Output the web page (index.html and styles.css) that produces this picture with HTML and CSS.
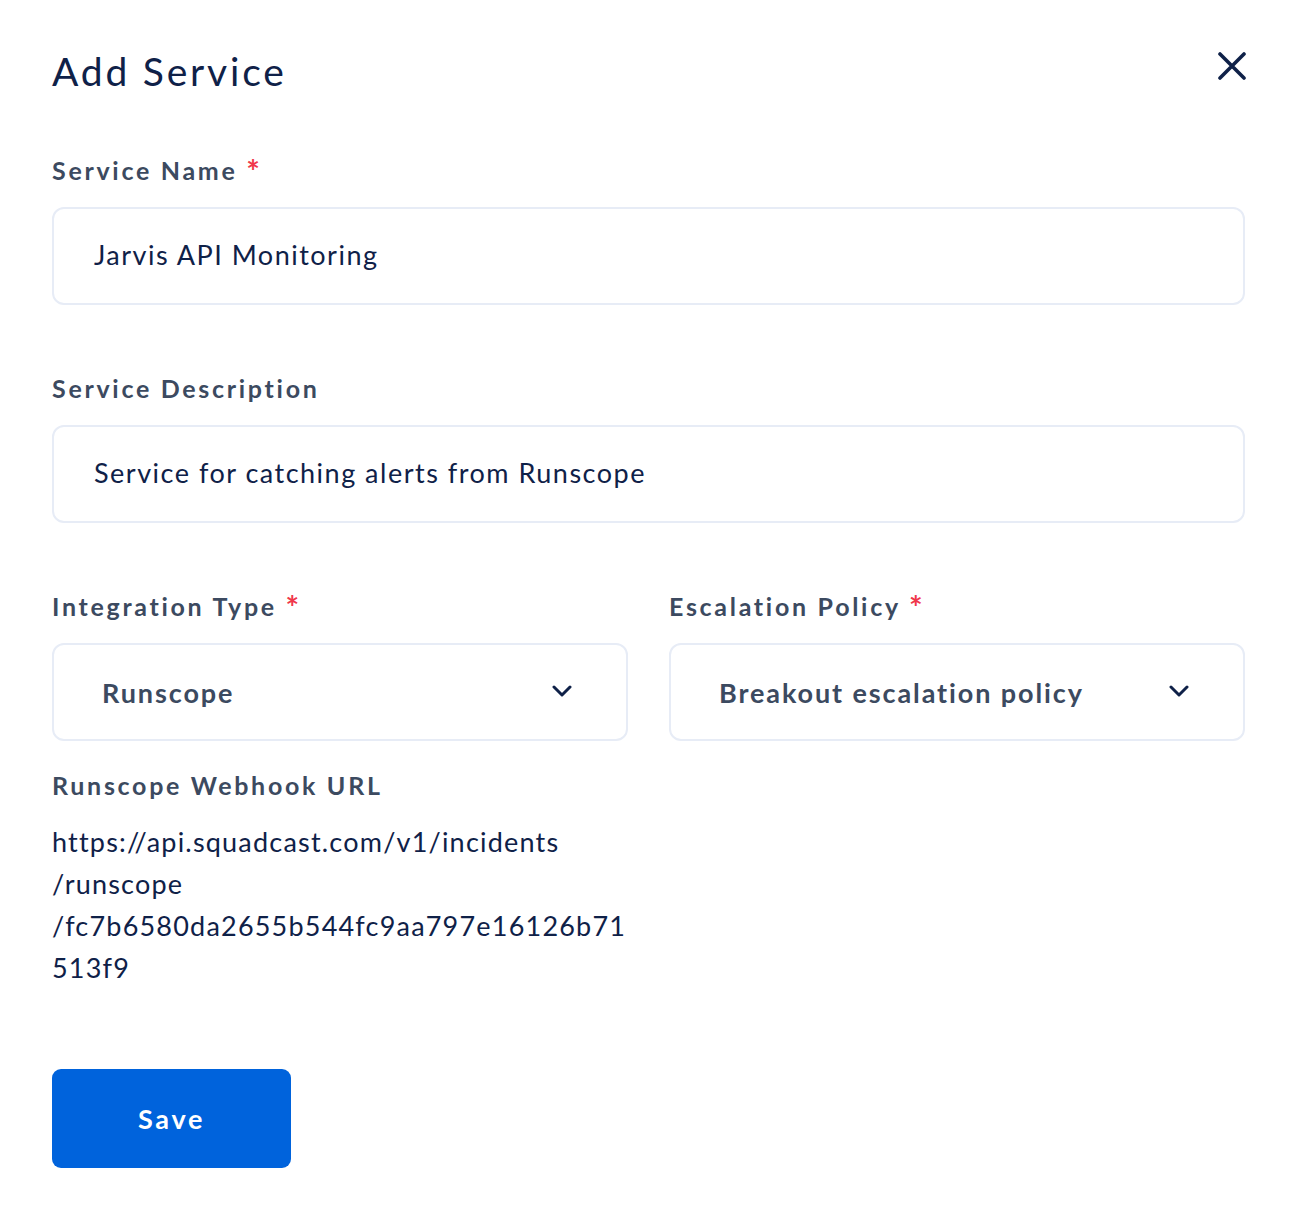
FILE: index.html
```html
<!DOCTYPE html>
<html lang="en">
<head>
<meta charset="utf-8">
<title>Add Service</title>
<link rel="stylesheet" href="styles.css">
</head>
<body>
<div class="modal">
  <div class="header">
    <h1 class="title">Add Service</h1>
    <button class="close" aria-label="Close">
      <svg width="28" height="28" viewBox="0 0 28 28"><path d="M2 2 L26 26 M26 2 L2 26" stroke="#0f2148" stroke-width="3.6" stroke-linecap="round" fill="none"/></svg>
    </button>
  </div>

  <div class="field first">
    <label class="label">Service Name <span class="req">*</span></label>
    <div class="input">Jarvis API Monitoring</div>
  </div>

  <div class="field">
    <label class="label">Service Description</label>
    <div class="input">Service for catching alerts from Runscope</div>
  </div>

  <div class="row">
    <div class="col">
      <label class="label">Integration Type <span class="req">*</span></label>
      <div class="select">
        <span>Runscope</span>
        <svg class="chev" width="20" height="12" viewBox="0 0 20 12"><path d="M2 2 L10 10 L18 2" stroke="#0f2148" stroke-width="3" stroke-linecap="round" stroke-linejoin="round" fill="none"/></svg>
      </div>
    </div>
    <div class="col">
      <label class="label">Escalation Policy <span class="req">*</span></label>
      <div class="select">
        <span>Breakout escalation policy</span>
        <svg class="chev" width="20" height="12" viewBox="0 0 20 12"><path d="M2 2 L10 10 L18 2" stroke="#0f2148" stroke-width="3" stroke-linecap="round" stroke-linejoin="round" fill="none"/></svg>
      </div>
    </div>
  </div>

  <div class="webhook">
    <label class="label">Runscope Webhook URL</label>
    <p class="url">https://api.squadcast.com/v1/incidents<br>/runscope<br>/fc7b6580da2655b544fc9aa797e16126b71<br>513f9</p>
  </div>

  <button class="save">Save</button>
</div>
</body>
</html>
```

FILE: styles.css
```css
html, body {
  margin: 0;
  padding: 0;
  background: #ffffff;
}

body {
  font-family: "Lato", "Liberation Sans", sans-serif;
  color: #0f2148;
}

.modal {
  padding: 40px 51px 40px 52px;
}

.header {
  display: flex;
  justify-content: space-between;
  align-items: flex-start;
  height: 64px;
}

.title {
  margin: 0;
  font-size: 39px;
  line-height: 62px;
  font-weight: 400;
  color: #0f2148;
  letter-spacing: 2.8px;
}

.close {
  margin-top: 12px;
  margin-right: -1px;
  padding: 0;
  border: 0;
  background: none;
  width: 28px;
  height: 28px;
  display: flex;
}

.field {
  display: flex;
  flex-direction: column;
  margin-top: 68px;
}

.field.first {
  margin-top: 51px;
}

.label {
  display: block;
  height: 30px;
  font-size: 25px;
  line-height: 30px;
  font-weight: 700;
  color: #3c4a60;
  letter-spacing: 2.7px;
  margin-bottom: 22px;
}

.req {
  display: inline-block;
  color: #f0374b;
  font-weight: 700;
  font-size: 32px;
  line-height: 30px;
  letter-spacing: 0;
  vertical-align: top;
  margin-top: 2px;
}

.input {
  box-sizing: border-box;
  height: 98px;
  border: 2px solid #e7ecf6;
  border-radius: 12px;
  padding: 0 40px;
  display: flex;
  align-items: center;
  font-size: 27px;
  color: #0f2148;
  letter-spacing: 1.5px;
  padding-bottom: 3px;
}

.row {
  display: grid;
  grid-template-columns: 1fr 1fr;
  column-gap: 41px;
  margin-top: 68px;
}

.col {
  display: flex;
  flex-direction: column;
}

.select {
  box-sizing: border-box;
  height: 98px;
  border: 2px solid #e7ecf6;
  border-radius: 12px;
  padding: 0 54px 0 48px;
  display: flex;
  align-items: center;
  justify-content: space-between;
  font-size: 27px;
  font-weight: 700;
  color: #3c4a60;
  letter-spacing: 1.9px;
}

.chev {
  margin-top: -2px;
}

.webhook {
  margin-top: 29px;
}

.webhook .label {
  margin-bottom: 21px;
}

.url {
  margin: 0;
  font-size: 27px;
  line-height: 42px;
  color: #0f2148;
  letter-spacing: 1.2px;
}

.save {
  margin-top: 80px;
  width: 239px;
  height: 99px;
  border: 0;
  border-radius: 9px;
  background: #0063dc;
  color: #ffffff;
  font-family: "Lato", "Liberation Sans", sans-serif;
  font-size: 27px;
  font-weight: 700;
  letter-spacing: 2.7px;
  cursor: pointer;
}
```
